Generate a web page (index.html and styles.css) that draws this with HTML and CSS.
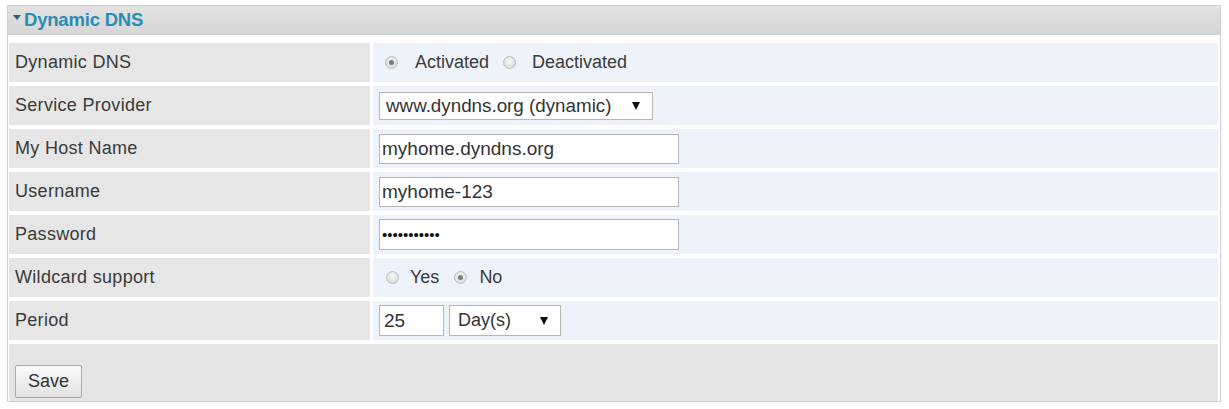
FILE: index.html
```html
<!DOCTYPE html>
<html>
<head>
<meta charset="utf-8">
<link rel="stylesheet" href="styles.css">
</head>
<body>
<div class="panel">
  <div class="panel-head"><span class="caret"></span><span class="title">Dynamic DNS</span></div>
  <div class="form">
    <div class="lbl">Dynamic DNS</div>
    <div class="val">
      <label class="radio wide"><span class="dot on"></span>Activated</label>
      <label class="radio wide"><span class="dot"></span>Deactivated</label>
    </div>

    <div class="lbl">Service Provider</div>
    <div class="val">
      <div class="select sel-provider"><span>www.dyndns.org (dynamic)</span><span class="arrow"></span></div>
    </div>

    <div class="lbl">My Host Name</div>
    <div class="val"><input class="text" type="text" value="myhome.dyndns.org"></div>

    <div class="lbl">Username</div>
    <div class="val"><input class="text" type="text" value="myhome-123"></div>

    <div class="lbl">Password</div>
    <div class="val"><input class="text pw" type="password" value="12345678901"></div>

    <div class="lbl">Wildcard support</div>
    <div class="val">
      <label class="radio tight"><span class="dot"></span>Yes</label>
      <label class="radio tight"><span class="dot on"></span>No</label>
    </div>

    <div class="lbl">Period</div>
    <div class="val">
      <input class="text short" type="text" value="25">
      <div class="select sel-period"><span>Day(s)</span><span class="arrow"></span></div>
    </div>

    <div class="save-row"><button class="btn">Save</button></div>
  </div>
</div>
</body>
</html>
```
FILE: styles.css
```css
html, body {
  margin: 0;
  padding: 0;
  background: #ffffff;
}
body {
  font-family: "Liberation Sans", Arial, sans-serif;
  font-size: 18px;
  color: #3a3a3a;
}
.panel {
  margin: 5px 8px 0 7px;
  border: 1px solid #d2d2d2;
  box-shadow: 0 1px 2px rgba(0,0,0,0.08);
  height: 397px;
  box-sizing: border-box;
  background: #ffffff;
}
.panel-head {
  height: 28px;
  background: linear-gradient(#e2e2e2, #d6d6d6);
  border-bottom: 1px solid #c9cfcf;
  display: flex;
  align-items: center;
  padding-left: 5px;
}
.caret {
  width: 0;
  height: 0;
  border-left: 4px solid transparent;
  border-right: 4px solid transparent;
  border-top: 5px solid #2f5f72;
  margin-right: 3px;
  margin-top: -6px;
}
.title {
  font-weight: bold;
  font-size: 18.5px;
  color: #2a8db3;
  letter-spacing: -0.2px;
}
.form {
  display: grid;
  grid-template-columns: 361px 1fr;
  grid-auto-rows: 39px;
  column-gap: 3px;
  row-gap: 4px;
  padding: 8px 2px 0 1px;
}
.lbl {
  background: #e6e6e6;
  display: flex;
  align-items: center;
  padding-left: 6px;
  letter-spacing: 0.3px;
  color: #3a3a3a;
}
.val {
  background: #eef3fb;
  display: flex;
  align-items: center;
  padding-left: 5px;
}
.radio {
  display: flex;
  align-items: center;
  color: #3a3a3a;
}
.dot {
  flex: none;
  width: 13px;
  height: 13px;
  border-radius: 50%;
  border: 1px solid #bcbcbc;
  background: radial-gradient(circle at 50% 40%, #f6f6f6, #d4d4d4);
  position: relative;
  box-sizing: border-box;
}
.radio.wide .dot {
  margin-left: 7px;
  margin-right: 17px;
}
.radio.wide + .radio.wide .dot {
  margin-left: 14px;
  margin-right: 16px;
}
.radio.tight .dot {
  margin-left: 8px;
  margin-right: 11px;
}
.radio.tight + .radio.tight .dot {
  margin-left: 15px;
  margin-right: 12px;
}
.dot.on::after {
  content: "";
  position: absolute;
  left: 3px;
  top: 3px;
  width: 5px;
  height: 5px;
  border-radius: 50%;
  background: #7a7a7a;
}
.select {
  height: 28px;
  box-sizing: border-box;
  border: 1px solid #b7b7b7;
  background: #ffffff;
  display: flex;
  align-items: center;
  justify-content: space-between;
  padding: 0 12px 0 6px;
  font-size: 18px;
  color: #333333;
}
.sel-provider {
  width: 274px;
  margin-left: 1px;
  font-size: 18.8px;
}
.sel-period {
  width: 112px;
  height: 31px;
  margin-left: 5px;
  padding-left: 8px;
}
.arrow {
  width: 0;
  height: 0;
  border-left: 4px solid transparent;
  border-right: 4px solid transparent;
  border-top: 8px solid #111111;
}
.text {
  font-family: "Liberation Sans", Arial, sans-serif;
  font-size: 19px;
  color: #333333;
  width: 300px;
  height: 30px;
  box-sizing: border-box;
  border: 1px solid #b7b7b7;
  padding: 0 2px;
  margin: 0 0 0 1px;
  background: #ffffff;
  outline: none;
}
.pw {
  font-size: 15px;
  color: #111111;
  height: 31px;
}
.short {
  width: 65px;
  height: 31px;
  padding-left: 4px;
}
.save-row {
  grid-column: 1 / 3;
  height: 57px;
  background: #e5e5e5;
  display: flex;
  align-items: flex-end;
  padding: 0 0 3px 6px;
  box-sizing: border-box;
}
.btn {
  font-family: "Liberation Sans", Arial, sans-serif;
  font-size: 18px;
  color: #333333;
  width: 67px;
  height: 33px;
  border: 1px solid #a9a9a9;
  border-radius: 2px;
  background: linear-gradient(#fafafa, #e2e2e2);
  padding: 0;
}
```
